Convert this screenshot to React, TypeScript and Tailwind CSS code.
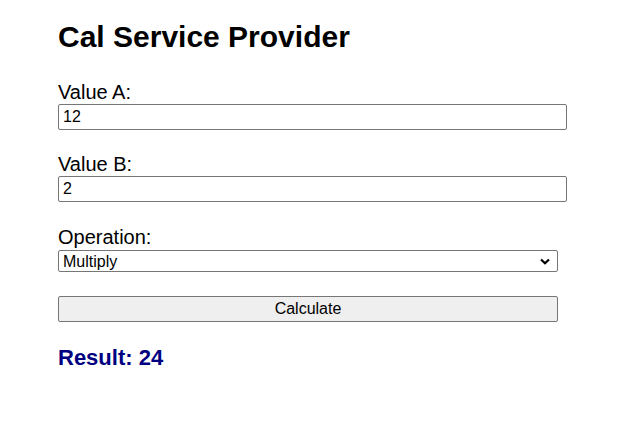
import React, { useState } from 'react';

const ops: Record<string, (a: number, b: number) => number> = {
  add: (a, b) => a + b,
  subtract: (a, b) => a - b,
  multiply: (a, b) => a * b,
  divide: (a, b) => a / b,
};

export default function App() {
  const [a, setA] = useState('12');
  const [b, setB] = useState('2');
  const [op, setOp] = useState('multiply');
  const [result, setResult] = useState<number | null>(24);

  const calculate = () => {
    setResult(ops[op](Number(a), Number(b)));
  };

  return (
    <div className="min-h-[424px] bg-white px-[58px] pt-[19px] font-['Liberation_Sans',Arial,sans-serif] text-black">
      <h1 className="h-[36px] text-[30px] font-bold leading-[36px]">Cal Service Provider</h1>

      <div className="mt-[26px] flex w-[509px] flex-col">
        <label className="h-[22px] text-[20px] leading-[22px]">Value A:</label>
        <input
          value={a}
          onChange={(e) => setA(e.target.value)}
          className="mt-[1px] block h-[26px] w-[509px] rounded-[2px] border border-[#767676] px-[4px] text-[16px] outline-none"
        />

        <label className="mt-[23px] h-[22px] text-[20px] leading-[22px]">Value B:</label>
        <input
          value={b}
          onChange={(e) => setB(e.target.value)}
          className="mt-[1px] block h-[26px] w-[509px] rounded-[2px] border border-[#767676] px-[4px] text-[16px] outline-none"
        />

        <label className="mt-[24px] h-[22px] text-[20px] leading-[22px]">Operation:</label>
        <div className="relative mt-[2px] h-[22px] w-[500px]">
          <select
            value={op}
            onChange={(e) => setOp(e.target.value)}
            className="block h-[22px] w-[500px] appearance-none rounded-[2px] border border-[#767676] bg-white pl-[4px] pt-[1px] text-[16px] leading-[20px] outline-none"
          >
            <option value="add">Add</option>
            <option value="subtract">Subtract</option>
            <option value="multiply">Multiply</option>
            <option value="divide">Divide</option>
          </select>
          <svg
            className="pointer-events-none absolute right-[8px] top-[8px]"
            width="10"
            height="7"
            viewBox="0 0 10 7"
            fill="none"
          >
            <path d="M1 1.5 L5 5.2 L9 1.5" stroke="#000" strokeWidth="2.2" />
          </svg>
        </div>

        <button
          onClick={calculate}
          className="mt-[24px] block h-[26px] w-[500px] rounded-[2px] border border-[#767676] bg-[#efefef] text-[16px]"
        >
          Calculate
        </button>

        {result !== null && (
          <div className="mt-[24px] h-[24px] text-[22px] font-bold leading-[24px] text-[#000080]">
            Result: {result}
          </div>
        )}
      </div>
    </div>
  );
}
